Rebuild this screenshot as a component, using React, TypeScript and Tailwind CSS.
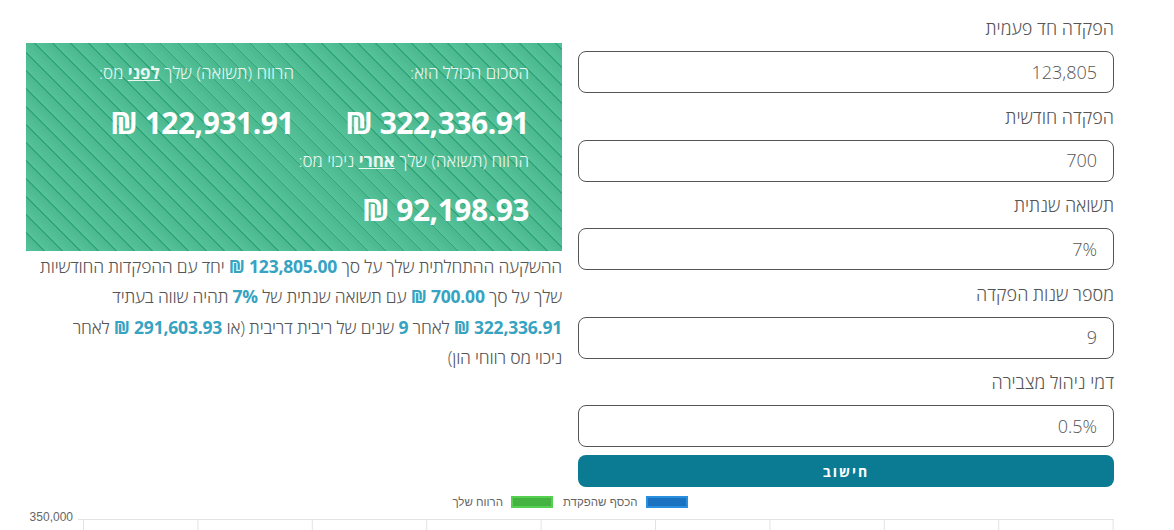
import React from "react"

const font = { fontFamily: '"Open Sans", "Liberation Sans", "DejaVu Sans", sans-serif' }

const fields = [
  { label: "הפקדה חד פעמית", value: "123,805" },
  { label: "הפקדה חודשית", value: "700" },
  { label: "תשואה שנתית", value: "7%" },
  { label: "מספר שנות הפקדה", value: "9" },
  { label: "דמי ניהול מצבירה", value: "0.5%" },
]

function B({ children }: { children: React.ReactNode }) {
  return <span className="whitespace-nowrap font-bold text-[#35a3c1]">{children}</span>
}

function ResultBox() {
  return (
    <div
      className="mt-[27px] h-[208px] px-[33px] pt-[18px] text-white"
      style={{
        backgroundImage:
          "repeating-linear-gradient(45deg, #2fa67a 0px, #2fa67a 1.2px, #56c29a 1.2px, #4bb890 12.7px)",
      }}
    >
      <div className="grid grid-cols-2">
        <div>
          <div className="h-[24px] text-[17px] font-light leading-[24px] text-[#eaf7f1]">הסכום הכולל הוא:</div>
          <div className="mt-[18px] h-[40px] text-[30px] font-bold leading-[40px] tracking-[-0.5px]">322,336.91 ₪</div>
        </div>
        <div>
          <div className="h-[24px] text-[17px] font-light leading-[24px] text-[#eaf7f1]">
            הרווח (תשואה) שלך <span className="font-bold underline">לפני</span> מס:
          </div>
          <div className="mt-[18px] h-[40px] text-[30px] font-bold leading-[40px] tracking-[-0.5px]">122,931.91 ₪</div>
        </div>
      </div>
      <div className="mt-[6px] h-[24px] text-[17px] font-light leading-[24px] text-[#eaf7f1]">
        הרווח (תשואה) שלך <span className="font-bold underline">אחרי</span> ניכוי מס:
      </div>
      <div className="mt-[17px] h-[40px] text-[30px] font-bold leading-[40px] tracking-[-0.5px]">92,198.93 ₪</div>
    </div>
  )
}

function Chart() {
  const xs = Array.from({ length: 10 }, (_, i) => 57.5 + i * 114.4)
  return (
    <div className="mt-[9px]">
      <div
        className="flex h-[12px] items-center justify-center gap-[8px] text-[11.5px] leading-[12px] text-[#666]"
        style={{ fontFamily: '"Liberation Sans", "DejaVu Sans", sans-serif' }}
      >
        <div className="h-[12px] w-[42px] border-2 border-[#2b8fe0] bg-[#1a72c0]" />
        <span>הכסף שהפקדת</span>
        <div className="mr-[2px] h-[12px] w-[42px] border-2 border-[#55d050] bg-[#44b341]" />
        <span>הרווח שלך</span>
      </div>
      <svg width="1088" height="300" className="block [direction:ltr]">
        <text x="47" y="13" textAnchor="end" fontSize="12" fill="#666" fontFamily="Liberation Sans, sans-serif">
          350,000
        </text>
        <line x1="52" y1="11.5" x2="1088" y2="11.5" stroke="#e3e3e3" strokeWidth="1" />
        {xs.map((x) => (
          <line key={x} x1={x} y1="11" x2={x} y2="300" stroke="#e3e3e3" strokeWidth="1" />
        ))}
      </svg>
    </div>
  )
}

export default function App() {
  return (
    <div dir="rtl" className="min-h-screen overflow-hidden bg-white pl-[26px] pr-[60px] pt-[16px]" style={font}>
      <div className="grid grid-cols-2 gap-4">
        <div>
          {fields.map((f) => (
            <div key={f.label}>
              <div className="h-[35px] text-[18px] font-light leading-[24px] text-[#555]">{f.label}</div>
              <div className="mb-[11.5px] flex h-[42px] items-center rounded-[8px] border border-[#555] px-[16px] text-[18px] font-light text-[#555]">
                <span dir="ltr">{f.value}</span>
              </div>
            </div>
          ))}
          <button className="-mt-[3.5px] flex h-[32px] w-full items-center justify-center rounded-[8px] bg-[#0b7a93] text-[14px] font-bold tracking-[2px] text-white">
            חישוב
          </button>
        </div>
        <div>
          <ResultBox />
          <p className="text-[17.5px] font-light leading-[30.4px] tracking-[-0.2px] text-[#555]">
            ההשקעה ההתחלתית שלך על סך <B>123,805.00 ₪</B> יחד עם ההפקדות החודשיות שלך על סך <B>700.00 ₪</B> עם
            תשואה שנתית של <B>7%</B> תהיה שווה בעתיד <B>322,336.91 ₪</B> לאחר <B>9</B> שנים של ריבית דריבית (או{" "}
            <B>291,603.93 ₪</B> לאחר {"ניכוי\u00a0מס"} רווחי הון)
          </p>
        </div>
      </div>
      <Chart />
    </div>
  )
}
